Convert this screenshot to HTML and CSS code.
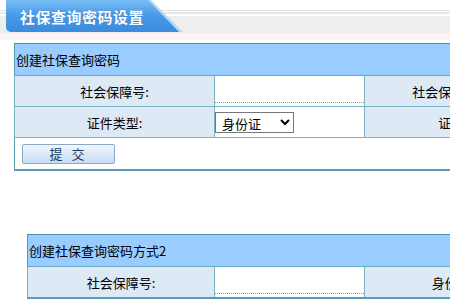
FILE: index.html
```html
<!DOCTYPE html>
<html lang="zh-CN">
<head>
    <meta charset="UTF-8">
    <meta name="viewport" content="width=device-width, initial-scale=1.0">
    <title>社保查询密码设置</title>
    <link rel="stylesheet" href="styles.css">
</head>
<body>

<div class="page-head">
    <div class="tab"><div class="tab-face">社保查询密码设置</div></div>
</div>

<table class="form-box first">
    <colgroup>
        <col class="col-label">
        <col class="col-field">
        <col class="col-label2">
        <col class="col-field">
    </colgroup>
    <tr>
        <th colspan="4">创建社保查询密码</th>
    </tr>
    <tr>
        <td class="label">社会保障号:</td>
        <td class="field"><input type="text" class="line-input"></td>
        <td class="label">社会保障卡号码:</td>
        <td class="field"><input type="text" class="line-input"></td>
    </tr>
    <tr>
        <td class="label">证件类型:</td>
        <td class="field">
            <select class="id-type">
                <option selected>身份证</option>
            </select>
        </td>
        <td class="label">证件号:</td>
        <td class="field"><input type="text" class="line-input"></td>
    </tr>
    <tr>
        <td colspan="4" class="actions"><button class="submit-btn">提 交</button></td>
    </tr>
</table>

<table class="form-box second">
    <colgroup>
        <col class="col-label">
        <col class="col-field">
        <col class="col-label2">
        <col class="col-field">
    </colgroup>
    <tr>
        <th colspan="4">创建社保查询密码方式2</th>
    </tr>
    <tr>
        <td class="label">社会保障号:</td>
        <td class="field"><input type="text" class="line-input"></td>
        <td class="label">身份证号:</td>
        <td class="field"><input type="text" class="line-input"></td>
    </tr>
</table>

</body>
</html>
```

FILE: styles.css
```css
html, body { margin: 0; padding: 0; overflow: hidden; background: #fff; }
body { font-family: "Noto Sans CJK SC", "Noto Sans", sans-serif; font-size: 13px; color: #000; }

.page-head { height: 43px; padding-left: 6px; box-sizing: border-box;
    background: linear-gradient(to bottom, #fff 0 10px, #e2e2e2 10px 11px, #fff 11px 12px, #e8e8e8 12px 14px, #fff 14px 16px, #eeeeee 16px 33px, #fbf1f6 33px 37px, #f6f8ef 37px 40px, #fff 40px); }
.tab { width: 177px; height: 32px; background: #b5d8f7; clip-path: polygon(0 0, 145px 0, 177px 32px, 0 32px); border-bottom-left-radius: 5px; }
.tab-face { width: 173px; height: 32px; box-sizing: border-box; padding-left: 14px; clip-path: polygon(0 0, 142px 0, 173px 32px, 0 32px);
    background: linear-gradient(to bottom, #79bdf5, #4b9be8 45%, #3a8ade); border-bottom-left-radius: 5px;
    color: #fff; font-weight: bold; font-size: 15px; line-height: 34px; letter-spacing: 0.5px; text-shadow: 0 0 1px #2a6ab0; }

.form-box { border-collapse: collapse; table-layout: fixed; border-top: 1px solid #4a90a8; border-bottom: 2px solid #5a9bb5; border-left: 1px solid #5a9bb5; }
.form-box.first { margin-left: 14px; width: 690px; }
.form-box.second { margin-left: 27px; margin-top: 63px; width: 677px; }
.form-box.first .col-label { width: 200px; }
.form-box.second .col-label { width: 187px; }
.col-field { width: 150px; }
.col-label2 { width: 190px; }

.form-box th { height: 31px; padding: 0 0 0 1px; background: #99ccff; text-align: left; font-weight: normal; border-bottom: 1px solid #6aa8bb; }
.form-box td { height: 30px; padding: 0; border: 1px solid #7ab3c3; border-top: none; white-space: nowrap; overflow: hidden; }
.label { background: #dde9f5; text-align: center; }
.field { background: #fff; }

.line-input { display: block; width: 100%; box-sizing: border-box; height: 22px; margin-top: 1px; border: none; border-bottom: 1px dotted #c08850; outline: none; background: transparent; }

.id-type { width: 79px; height: 21px; border: 1px solid #777; border-radius: 0; background: #fff; font-family: inherit; font-size: 13px; padding: 0 0 0 2px; color: #000; }

.actions { height: 31px !important; background: #fff; padding-left: 7px !important; border: none !important; }
.submit-btn { width: 93px; height: 20px; padding: 0; border: 1px solid #8ba9c6; border-radius: 2px; background: linear-gradient(to bottom, #f3f8fd, #dbe9f8 50%, #c6dcf3); color: #1b3c66; font-family: inherit; font-size: 13px; line-height: 18px; letter-spacing: 3px; cursor: pointer; }
```
